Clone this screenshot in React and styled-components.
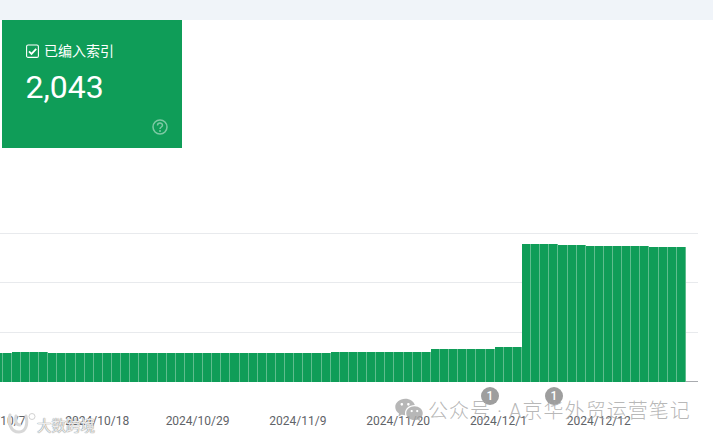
import styled, { createGlobalStyle } from "styled-components";
import { RiWechatFill } from "react-icons/ri";

const GlobalStyle = createGlobalStyle`
	html, body {
		margin: 0;
		padding: 0;
		background: #fff;
		overflow: hidden;
	}
`;

// runs of [bar count, top y of the bar in the page]
const barRuns = [
	[2, 353], [4, 352], [31, 353], [11, 352], [7, 349], [3, 347],
	[4, 244], [3, 245], [7, 246], [4, 247],
];
const BASELINE = 382;
const bars = barRuns.flatMap(([count, top]) => Array(count).fill(BASELINE - top));

const dates = [
	"2024/10/7", "2024/10/18", "2024/10/29", "2024/11/9",
	"2024/11/20", "2024/12/1", "2024/12/12",
];

const CheckIcon = () => (
	<svg width="13" height="14" viewBox="0 0 13 14" fill="none">
		<rect x="0.6" y="1" width="11.8" height="12.4" rx="1.5" stroke="#fff" strokeWidth="1.1" />
		<path d="M3 7.4 L5.5 9.9 L10.2 4.8" stroke="#fff" strokeWidth="1.8" />
	</svg>
);

const HelpIcon = () => (
	<svg width="16" height="16" viewBox="0 0 16 16" fill="none">
		<circle cx="8" cy="8" r="7" stroke="#fff" strokeWidth="1.5" />
		<path
			d="M5.5 6.4 C5.5 3.3 10.5 3.3 10.5 6.3 C10.5 8 8 8 8 10"
			stroke="#fff"
			strokeWidth="1.5"
		/>
		<circle cx="8" cy="12" r="1" fill="#fff" />
	</svg>
);

const BrandMark = () => (
	<svg width="30" height="24" viewBox="0 0 30 24" fill="none">
		<path
			d="M3 3 C1 10 3 20 12 20 C19 20 21 12 19 4 M9 4 C8 9 9 13 13 13"
			stroke="#d8d8d8"
			strokeWidth="3"
			strokeLinecap="round"
		/>
		<circle cx="25" cy="4.5" r="3" stroke="#d2d2d2" strokeWidth="1" />
	</svg>
);

export default function App() {
	return (
		<Page>
			<GlobalStyle />
			<TopBand />
			<Card>
				<CardLabel>
					<CheckIcon />
					<span>已编入索引</span>
				</CardLabel>
				<CardValue>2,043</CardValue>
				<CardHelp>
					<HelpIcon />
				</CardHelp>
			</Card>
			<Plot>
				<GridLine />
				<GridLine />
				<GridLine />
				<Bars>
					{bars.map((height, i) => (
						<Bar key={i} style={{ height }} />
					))}
				</Bars>
			</Plot>
			<Axis>
				{dates.map((date) => (
					<AxisLabel key={date}>{date}</AxisLabel>
				))}
			</Axis>
			<Badge $left={481}>1</Badge>
			<Badge $left={545}>1</Badge>
			<WechatMark>
				<RiWechatFill size={30} />
				<WechatText>公众号 · A京华外贸运营笔记</WechatText>
			</WechatMark>
			<BrandWatermark>
				<BrandMark />
				<span>大数跨境</span>
			</BrandWatermark>
		</Page>
	);
}

const Page = styled.div`
	position: relative;
	width: 713px;
	height: 439px;
	overflow: hidden;
	background: #fff;
	font-family: Roboto, "Noto Sans CJK SC", sans-serif;
`;

const TopBand = styled.div`
	height: 20px;
	background: #f0f4f9;
`;

const Card = styled.div`
	position: relative;
	box-sizing: border-box;
	width: 180px;
	height: 128px;
	margin-left: 2px;
	padding: 23px 0 0 24px;
	background: #0f9d58;
	color: #fff;
`;

const CardLabel = styled.div`
	display: flex;
	align-items: center;
	gap: 5px;
	font-size: 14px;
	line-height: 16px;
`;

const CardValue = styled.div`
	margin: 9px 0 0 -0.5px;
	font-size: 32px;
	line-height: 38px;
`;

const CardHelp = styled.div`
	position: absolute;
	right: 14px;
	bottom: 13px;
	height: 16px;
	opacity: 0.45;
`;

const Plot = styled.div`
	position: relative;
	display: flex;
	flex-direction: column;
	box-sizing: border-box;
	width: 698px;
	height: 149px;
	margin-top: 85px;
	border-bottom: 1px solid #a8abaf;
`;

const GridLine = styled.div`
	flex: 1;
	border-top: 1px solid #e8eaed;
`;

const Bars = styled.div`
	position: absolute;
	left: -6.4px;
	bottom: -1px;
	display: flex;
	align-items: flex-end;
`;

const Bar = styled.div`
	box-sizing: border-box;
	flex: 0 0 9.11px;
	background: #0f9d58;
	border-right: 1px solid #5fbd8e;
`;

const Axis = styled.div`
	display: flex;
	margin: 32px 0 0 -53.2px;
`;

const AxisLabel = styled.div`
	flex: 0 0 100.3px;
	text-align: center;
	font-size: 12px;
	line-height: 14px;
	color: #5f6368;
	white-space: nowrap;
`;

const Badge = styled.div`
	position: absolute;
	top: 387px;
	left: ${(p) => p.$left}px;
	width: 18px;
	height: 18px;
	border-radius: 50%;
	background: #9e9e9e;
	color: #fff;
	font-size: 12px;
	font-weight: 500;
	line-height: 18px;
	text-align: center;
`;

const WechatMark = styled.div`
	position: absolute;
	top: 394px;
	left: 394px;
	display: flex;
	align-items: center;
	gap: 4px;
	color: rgba(165, 165, 165, 0.8);
	font-size: 20px;
	font-weight: 300;
	letter-spacing: 1.05px;
	line-height: 30px;
	white-space: nowrap;
`;

const WechatText = styled.span`
	margin-top: 2px;
`;

const BrandWatermark = styled.div`
	position: absolute;
	top: 412px;
	left: 7px;
	display: flex;
	align-items: center;
	color: rgba(255, 255, 255, 0.85);
	font-size: 14.5px;
	text-shadow: 0 0 1px #888, 0 0 1px #888;
	white-space: nowrap;
`;
